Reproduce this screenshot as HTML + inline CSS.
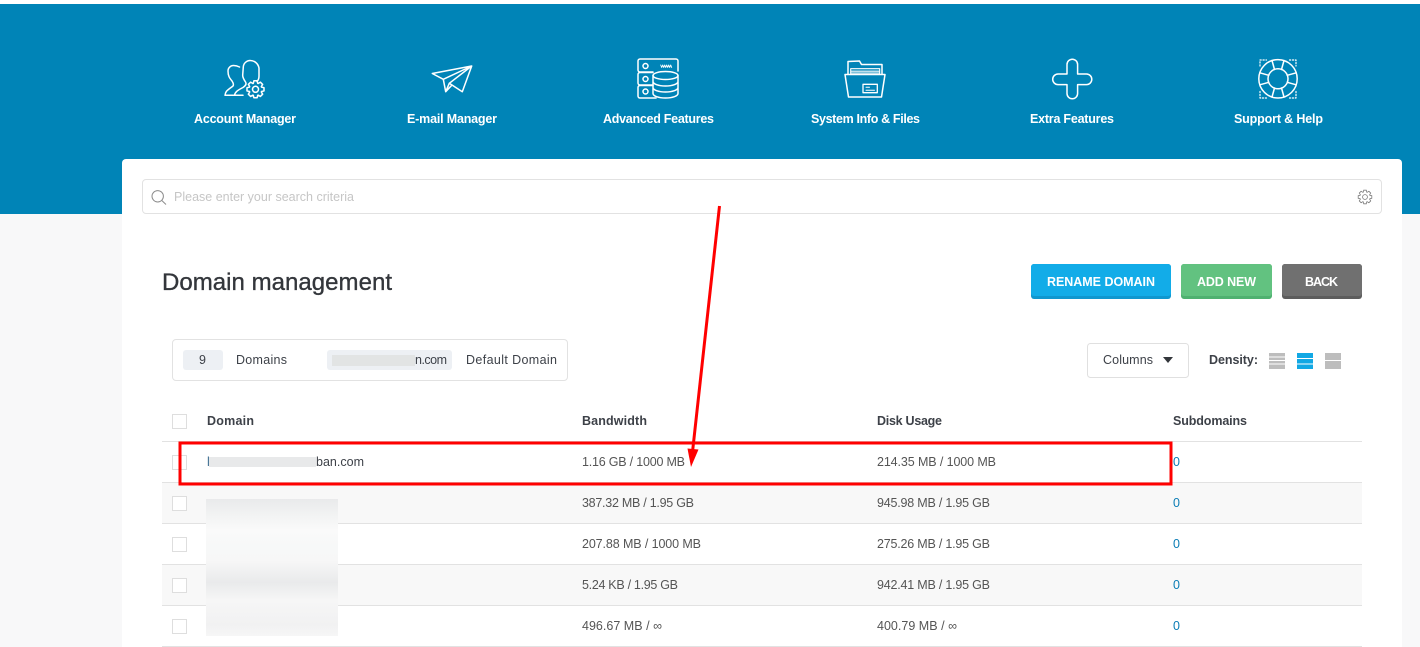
<!DOCTYPE html>
<html><head><meta charset="utf-8"><title>Domain management</title>
<style>
html,body{margin:0;padding:0;width:1420px;height:647px;overflow:hidden;background:#f8f8f9}
svg{display:block}
text{font-family:"Liberation Sans",sans-serif;font-size:12.5px;fill:#555;white-space:pre}
.n{font-size:12.5px;font-weight:700;fill:#fff}
.h{font-weight:700;fill:#3d4148}
.d{fill:#3d4148}
.b{font-size:12.5px;font-weight:700;fill:#fff}
.l{fill:#0b7db5}
.i{fill:none;stroke:#fff;stroke-width:1.5;stroke-linejoin:round;stroke-linecap:round}
.c{fill:#fff;stroke:#dedede;stroke-width:1}
</style></head>
<body>
<svg width="1420" height="647" viewBox="0 0 1420 647" xmlns="http://www.w3.org/2000/svg">
<defs>
<linearGradient id="gr" x1="0" y1="499" x2="0" y2="636" gradientUnits="userSpaceOnUse">
<stop offset="0" stop-color="#e9eaeb"/>
<stop offset=".12" stop-color="#f2f3f3"/>
<stop offset=".23" stop-color="#fafafa"/>
<stop offset=".34" stop-color="#f7f8f8"/>
<stop offset=".45" stop-color="#f7f7f7"/>
<stop offset=".61" stop-color="#e9eaeb"/>
<stop offset=".74" stop-color="#f6f6f6"/>
<stop offset=".92" stop-color="#f1f1f2"/>
<stop offset="1" stop-color="#f6f6f6"/>
</linearGradient>
<path id="gear" d="M-2.200 -6L-1.600 -8.500H1.600L2.200 -6L2.690 -5.800L4.880 -7.140L7.140 -4.880L5.800 -2.690L6 -2.200L8.500 -1.600V1.600L6 2.200L5.800 2.690L7.140 4.880L4.880 7.140L2.690 5.800L2.200 6L1.600 8.500H-1.600L-2.200 6L-2.690 5.800L-4.880 7.140L-7.140 4.880L-5.800 2.690L-6 2.200L-8.500 1.600V-1.600L-6 -2.200L-5.800 -2.690L-7.140 -4.880L-4.880 -7.140L-2.690 -5.800Z"/>
</defs>
<rect width="1420" height="647" fill="#f8f8f9"/>
<rect width="1420" height="4" fill="#fff"/>
<rect y="4" width="1420" height="210" fill="#0084b7"/>
<path d="M122 647V163a4 4 0 0 1 4-4H1398a4 4 0 0 1 4 4V647Z" fill="#fff"/>

<!-- nav icons -->
<g class="i">
<!-- account -->
<path d="M243 95.300H225C225.500 91 227 90.500 233 86C234 84.500 233 82.500 232 81C229.500 78 228 76 228 71C228 67.500 231 65.500 233.500 65.500C235.500 65.500 237.500 66 239.500 67"/>
<path d="M234.500 95.300C235 92 238 90 243 87.500C246 85.500 246.500 83.500 245.500 82C243.500 79 242.500 77 242.700 75L243.300 67C243.500 63 247 60.500 250 60.500C254 60.500 258 63 259 68V76C259 78 258.500 80 257 81.500"/>
<g transform="translate(255.500 89.300)"><use href="#gear"/><circle r="3"/></g>
<!-- plane -->
<path d="M432.300 73.500L471.700 66 462.300 91.700 449.300 83.300 445.700 91.700 443.300 79.300ZM443.300 79.300L471.700 66 449.300 83.300M445.700 91.700L452 85"/>
<!-- server -->
<path d="M653 72H640a2 2 0 0 1-2-2V61a2 2 0 0 1 2-2H676a2 2 0 0 1 2 2V71M653 72.500H640a2 2 0 0 0-2 2V83a2 2 0 0 0 2 2h13M653 85.500H640a2 2 0 0 0-2 2V96a2 2 0 0 0 2 2h16"/>
<circle cx="645.500" cy="66" r="2.500"/><circle cx="645.500" cy="79" r="2.500"/><circle cx="645.500" cy="91.500" r="2.500"/>
<path d="M660.700 65l1 2.500 1-2.500 1 2.500 1-2.500 1 2.500 1-2.500 1 2.500 1-2.500 1 2.500 1-2.500 1 2.500" stroke-width=".9"/>
<ellipse cx="665.500" cy="75.500" rx="12.500" ry="4"/>
<path d="M653 75.500V93.500c0 2.500 5.500 4.500 12.500 4.500s12.500-2 12.500-4.500V75.500M653 81.500c0 2.500 5.500 4.500 12.500 4.500s12.500-2 12.500-4.500M653 87.500c0 2.500 5.500 4.500 12.500 4.500s12.500-2 12.500-4.500"/>
<!-- folder -->
<path d="M848 74V61.500L859.500 61l2 3.500H882V74"/>
<path d="M850.700 74V68.700H879.700V74M850.700 71.200h29M850.700 73h29" stroke-width="1.100"/>
<path d="M845 74.500H885L881.500 97H848.500Z"/>
<rect x="863" y="84.300" width="14.300" height="8.400" stroke-width="1.300"/>
<path d="M866 87.300h3.500M866 90.200h8.500" stroke-width="1"/>
<!-- plus -->
<path d="M1067 74V64.500a5.300 5.300 0 0 1 10.600 0V74H1086.500a5 5 0 0 1 0 10.600H1077.600V93.500a5.300 5.300 0 0 1-10.600 0V84.600H1058a5 5 0 0 1 0-10.600Z"/>
<!-- ring -->
<circle cx="1278" cy="78.800" r="19.200"/>
<circle cx="1278" cy="78.800" r="10"/>
<path d="M1272 60.500L1274.500 69.500M1284 60.500L1281.500 69.500M1272 97L1274.500 88M1284 97L1281.500 88M1259.800 72.800L1268.800 75.300M1259.800 84.800L1268.800 82.300M1296.200 72.800L1287.200 75.300M1296.200 84.800L1287.200 82.300"/>
<path d="M1260 66V60H1266.500M1289.500 60H1296V66M1296 91.500V98H1289.500M1266.500 98H1260V91.500" stroke-width="1.200" stroke-dasharray="1.200 1.800"/>
</g>
<text class="n" x="194" y="123" textLength="102">Account Manager</text>
<text class="n" x="407" y="123" textLength="90">E-mail Manager</text>
<text class="n" x="603" y="123" textLength="111">Advanced Features</text>
<text class="n" x="811" y="123" textLength="109">System Info &amp; Files</text>
<text class="n" x="1030" y="123" textLength="84">Extra Features</text>
<text class="n" x="1234" y="123" textLength="89">Support &amp; Help</text>

<!-- search -->
<rect x="142.500" y="179.500" width="1239" height="34" rx="3.500" fill="#fff" stroke="#e2e2e2"/>
<circle cx="157.700" cy="196.300" r="5.700" fill="none" stroke="#8c8c8c"/>
<path d="M161.800 200.500L166 204.500" stroke="#8c8c8c" fill="none"/>
<text x="174" y="201" textLength="180" style="fill:#c6c6c6">Please enter your search criteria</text>
<g transform="translate(1365 197) scale(.8)" fill="none" stroke="#7a7a7a" stroke-width="1">
<use href="#gear"/><circle r="3"/>
</g>

<!-- title -->
<text x="162" y="290" textLength="230" style="font-size:24px;fill:#33363b;stroke:#33363b;stroke-width:.35">Domain management</text>

<!-- buttons -->
<rect x="1031" y="264" width="140" height="35" rx="3" fill="#0f97cf"/>
<rect x="1031" y="264" width="140" height="32" rx="3" fill="#12ace8"/>
<rect x="1181" y="264" width="91" height="35" rx="3" fill="#4fb170"/>
<rect x="1181" y="264" width="91" height="32" rx="3" fill="#62c280"/>
<rect x="1282" y="264" width="80" height="35" rx="3" fill="#5d5d5d"/>
<rect x="1282" y="264" width="80" height="32" rx="3" fill="#707070"/>
<text class="b" x="1047" y="286" textLength="108">RENAME DOMAIN</text>
<text class="b" x="1197" y="286" textLength="59">ADD NEW</text>
<text class="b" x="1305" y="286" textLength="33">BACK</text>

<!-- stats -->
<rect x="172.500" y="339.500" width="395" height="41" rx="3.500" fill="#fff" stroke="#e2e2e2"/>
<rect x="183" y="350" width="40" height="20" rx="3" fill="#edf0f4"/>
<text class="d" x="199" y="364" textLength="7">9</text>
<text class="d" x="236" y="364" textLength="51">Domains</text>
<rect x="327" y="350" width="125" height="20" rx="3" fill="#edf0f4"/>
<text class="d" x="415" y="364" textLength="32">n.com</text>
<rect x="332" y="355" width="83" height="11" fill="#e2e4e4"/>
<text class="d" x="466" y="364" textLength="91">Default Domain</text>

<!-- columns / density -->
<rect x="1087.500" y="343.500" width="101" height="34" rx="3" fill="#fff" stroke="#e0e0e0"/>
<text x="1103" y="364" textLength="50" class="d">Columns</text>
<path d="M1163 357H1173L1168 363Z" fill="#33363b"/>
<text class="h" x="1209" y="364" textLength="49">Density:</text>
<g fill="#bdbdbd">
<rect x="1269" y="353" width="16" height="3.500"/><rect x="1269" y="357.500" width="16" height="2.500"/><rect x="1269" y="361" width="16" height="2.500"/><rect x="1269" y="364.500" width="16" height="4.500"/>
<rect x="1325" y="353" width="16" height="7"/><rect x="1325" y="361" width="16" height="8"/>
</g>
<g fill="#12a8e4"><rect x="1297" y="353" width="16" height="5"/><rect x="1297" y="359" width="16" height="4.500"/><rect x="1297" y="364.500" width="16" height="4.500"/></g>

<!-- table -->
<rect x="162" y="483" width="1200" height="40" fill="#f8f8f8"/>
<rect x="162" y="565" width="1200" height="40" fill="#f8f8f8"/>
<g fill="#e2e2e2">
<rect x="162" y="441" width="1200" height="1"/><rect x="162" y="482" width="1200" height="1"/><rect x="162" y="523" width="1200" height="1"/><rect x="162" y="564" width="1200" height="1"/><rect x="162" y="605" width="1200" height="1"/><rect x="162" y="646" width="1200" height="1"/>
</g>
<rect class="c" x="172.500" y="414.500" width="14" height="14"/>
<rect class="c" x="172.500" y="455.500" width="14" height="14"/>
<rect class="c" x="172.500" y="496.500" width="14" height="14"/>
<rect class="c" x="172.500" y="537.500" width="14" height="14"/>
<rect class="c" x="172.500" y="578.500" width="14" height="14"/>
<rect class="c" x="172.500" y="619.500" width="14" height="14"/>

<text class="h" x="207" y="425" textLength="47">Domain</text>
<text class="h" x="582" y="425" textLength="65">Bandwidth</text>
<text class="h" x="877" y="425" textLength="65">Disk Usage</text>
<text class="h" x="1173" y="425" textLength="74">Subdomains</text>

<text class="d" x="207" y="466" style="fill:#3f6f92">l</text>
<rect x="209" y="457" width="107" height="10" fill="#e8e9ea"/>
<text class="d" x="316" y="466" textLength="48">ban.com</text>

<text x="582" y="466" textLength="103">1.16 GB / 1000 MB</text>
<text x="582" y="507" textLength="112">387.32 MB / 1.95 GB</text>
<text x="582" y="548" textLength="119">207.88 MB / 1000 MB</text>
<text x="582" y="589" textLength="96">5.24 KB / 1.95 GB</text>
<text x="582" y="630" textLength="80">496.67 MB / ∞</text>
<text x="877" y="466" textLength="119">214.35 MB / 1000 MB</text>
<text x="877" y="507" textLength="113">945.98 MB / 1.95 GB</text>
<text x="877" y="548" textLength="113">275.26 MB / 1.95 GB</text>
<text x="877" y="589" textLength="113">942.41 MB / 1.95 GB</text>
<text x="877" y="630" textLength="80">400.79 MB / ∞</text>
<text class="l" x="1173" y="466">0</text>
<text class="l" x="1173" y="507">0</text>
<text class="l" x="1173" y="548">0</text>
<text class="l" x="1173" y="589">0</text>
<text class="l" x="1173" y="630">0</text>

<!-- blurred redaction block -->
<rect x="206" y="499" width="132" height="137" fill="url(#gr)"/>

<!-- annotations -->
<rect x="180" y="443" width="991" height="41" fill="none" stroke="#f00" stroke-width="3"/>
<path d="M719.500 206L692.500 452" stroke="#f00" stroke-width="3" fill="none"/>
<path d="M687.500 448.500L698.500 449.500 691 467Z" fill="#f00"/>
</svg>
</body></html>
